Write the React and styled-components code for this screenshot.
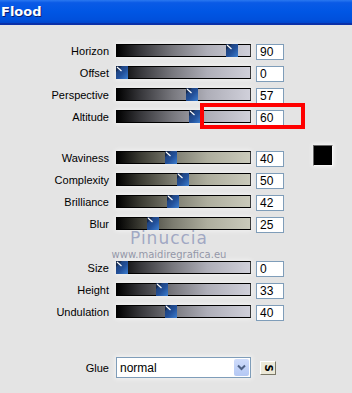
import React from "react";
import styled, { createGlobalStyle } from "styled-components";

const Global = createGlobalStyle`
  html, body { margin: 0; padding: 0; background: #e4e4e4; }
  body { font-family: "Liberation Sans", Arial, sans-serif; }
`;

const Window = styled.div`
  position: relative;
  width: 352px;
  height: 393px;
  background: #e4e4e4;
  overflow: hidden;
`;

const TitleBar = styled.div`
  height: 23px;
  background: linear-gradient(to bottom, #2a78f0 0%, #0a5ae6 12%, #0056e4 50%, #0050dc 85%, #0046cc 100%);
  border-bottom: 2px solid #0a30a8;
  display: flex;
  align-items: center;
  padding-left: 1px;
  color: #fff;
  font-family: "DejaVu Sans", "Liberation Sans", sans-serif;
  font-weight: bold;
  font-size: 13px;
  text-shadow: 1px 1px 0 #0a1e70;
`;

const Content = styled.div`
  padding-top: 19px;
  display: flex;
  flex-direction: column;
`;

const Group = styled.div`
  display: flex;
  margin-bottom: ${(p) => p.$after}px;
`;

const Rows = styled.div`
  display: flex;
  flex-direction: column;
`;

const Row = styled.div`
  display: flex;
  align-items: ${(p) => (p.$center ? "center" : "flex-start")};
  height: ${(p) => p.$h || 22}px;
`;

const Label = styled.div`
  width: 109px;
  margin-right: 7px;
  text-align: right;
  font-size: 11px;
  line-height: 14px;
  color: #000;
`;

const Track = styled.div`
  position: relative;
  box-sizing: border-box;
  width: 135px;
  height: 13px;
  margin-right: 5px;
  border: 1px solid #000;
  border-right-color: #3a3a3a;
  background: ${(p) =>
    p.$tone === "sand"
      ? "linear-gradient(to right, #000 0%, #3c3c34 18%, #7c7c70 42%, #aeae9e 68%, #cacabb 100%)"
      : "linear-gradient(to right, #000 0%, #38383c 18%, #78787e 42%, #aeaeb8 68%, #d0d0da 100%)"};
  box-shadow: 0 0 5px 1px rgba(255, 255, 255, 0.55);
`;

const ThumbBox = styled.svg`
  position: absolute;
  top: -1px;
  width: 12px;
  height: 13px;
  display: block;
`;

const Input = styled.div`
  box-sizing: border-box;
  width: 28px;
  height: 16px;
  border: 1px solid #7f9db9;
  background: #fff;
  font-size: 12px;
  line-height: 14px;
  padding-left: 3px;
  color: #000;
`;

const Aside = styled.div`
  margin-left: 29px;
  margin-top: -6px;
`;

const Swatch = styled.div`
  width: 18px;
  height: 19px;
  background: #000;
  border: 1px solid;
  border-color: #6a6a6a #f8f8f8 #f8f8f8 #6a6a6a;
  box-shadow: 0 0 4px 1px rgba(255, 255, 255, 0.7);
`;

const Select = styled.div`
  box-sizing: border-box;
  width: 135px;
  height: 21px;
  margin-right: 9px;
  border: 1px solid #7f9db9;
  background: #fff;
  display: flex;
  align-items: center;
  justify-content: space-between;
  padding-left: 3px;
  padding-right: 1px;
  font-size: 12px;
  color: #000;
  box-shadow: 0 0 5px 1px rgba(255, 255, 255, 0.6);
`;

const DropBtn = styled.div`
  width: 15px;
  height: 17px;
  border-radius: 2px;
  background: linear-gradient(to bottom, #cfdcfb, #b4c8f4);
  display: flex;
  align-items: center;
  justify-content: center;
`;

const SmallBtn = styled.div`
  box-sizing: border-box;
  width: 16px;
  height: 14px;
  background: #ece9d8;
  border: 1px solid;
  border-color: #fff #7a7868 #7a7868 #fff;
  display: flex;
  align-items: center;
  justify-content: center;
`;

const BtnGlyph = styled.span`
  display: inline-block;
  transform: rotate(90deg);
  font-family: "DejaVu Sans", sans-serif;
  font-weight: bold;
  font-size: 10px;
  line-height: 10px;
  color: #000;
`;

const Watermark = styled.div`
  position: absolute;
  left: 108px;
  top: 228px;
  width: 122px;
  display: flex;
  flex-direction: column;
  align-items: center;
  pointer-events: none;
`;

const WmTitle = styled.div`
  font-family: "DejaVu Sans", sans-serif;
  font-size: 17px;
  letter-spacing: 1px;
  color: rgba(130, 140, 180, 0.7);
  line-height: 21px;
`;

const WmUrl = styled.div`
  font-family: "DejaVu Sans", sans-serif;
  font-size: 10px;
  color: rgba(110, 115, 140, 0.7);
  line-height: 12px;
`;

const Highlight = styled.div`
  position: absolute;
  left: 200px;
  top: 103px;
  width: 105px;
  height: 26px;
  box-sizing: border-box;
  border: 4px solid #ff0000;
`;

function Thumb({ value }) {
  return (
    <ThumbBox viewBox="0 0 12 13" style={{ left: Math.round(value * 1.22) - 1 }}>
      <defs>
        <linearGradient id="tg" x1="0" y1="0" x2="1" y2="1">
          <stop offset="0" stopColor="#1c3868" />
          <stop offset="0.55" stopColor="#22509a" />
          <stop offset="1" stopColor="#3c7ed0" />
        </linearGradient>
      </defs>
      <rect x="0" y="0" width="12" height="13" fill="url(#tg)" />
      <polygon points="0,0 6,0 0,6" fill="#101c34" opacity="0.6" />
      <line x1="1" y1="1" x2="5.5" y2="5" stroke="#ffffff" strokeWidth="1.2" />
    </ThumbBox>
  );
}

function SliderRow({ label, value, tone }) {
  return (
    <Row>
      <Label>{label}</Label>
      <Track $tone={tone}>
        <Thumb value={value} />
      </Track>
      <Input>{value}</Input>
    </Row>
  );
}

const g1 = [
  ["Horizon", 90],
  ["Offset", 0],
  ["Perspective", 57],
  ["Altitude", 60],
];
const g2 = [
  ["Waviness", 40],
  ["Complexity", 50],
  ["Brilliance", 42],
  ["Blur", 25],
];
const g3 = [
  ["Size", 0],
  ["Height", 33],
  ["Undulation", 40],
];

export default function App() {
  return (
    <>
      <Global />
      <Window>
        <TitleBar>Flood</TitleBar>
        <Content>
          <Group $after={19}>
            <Rows>
              {g1.map(([l, v]) => (
                <SliderRow key={l} label={l} value={v} />
              ))}
            </Rows>
          </Group>
          <Group $after={22}>
            <Rows>
              {g2.map(([l, v]) => (
                <SliderRow key={l} label={l} value={v} tone="sand" />
              ))}
            </Rows>
            <Aside>
              <Swatch />
            </Aside>
          </Group>
          <Group $after={30}>
            <Rows>
              {g3.map(([l, v]) => (
                <SliderRow key={l} label={l} value={v} />
              ))}
            </Rows>
          </Group>
          <Row $center $h={21}>
            <Label>Glue</Label>
            <Select>
              <span>normal</span>
              <DropBtn>
                <svg width="9" height="7" viewBox="0 0 9 7">
                  <path d="M1 1.5 L4.5 5 L8 1.5" fill="none" stroke="#4d6185" strokeWidth="2" />
                </svg>
              </DropBtn>
            </Select>
            <SmallBtn>
              <BtnGlyph>S</BtnGlyph>
            </SmallBtn>
          </Row>
        </Content>
        <Watermark>
          <WmTitle>Pinuccia</WmTitle>
          <WmUrl>www.maidiregrafica.eu</WmUrl>
        </Watermark>
        <Highlight />
      </Window>
    </>
  );
}
